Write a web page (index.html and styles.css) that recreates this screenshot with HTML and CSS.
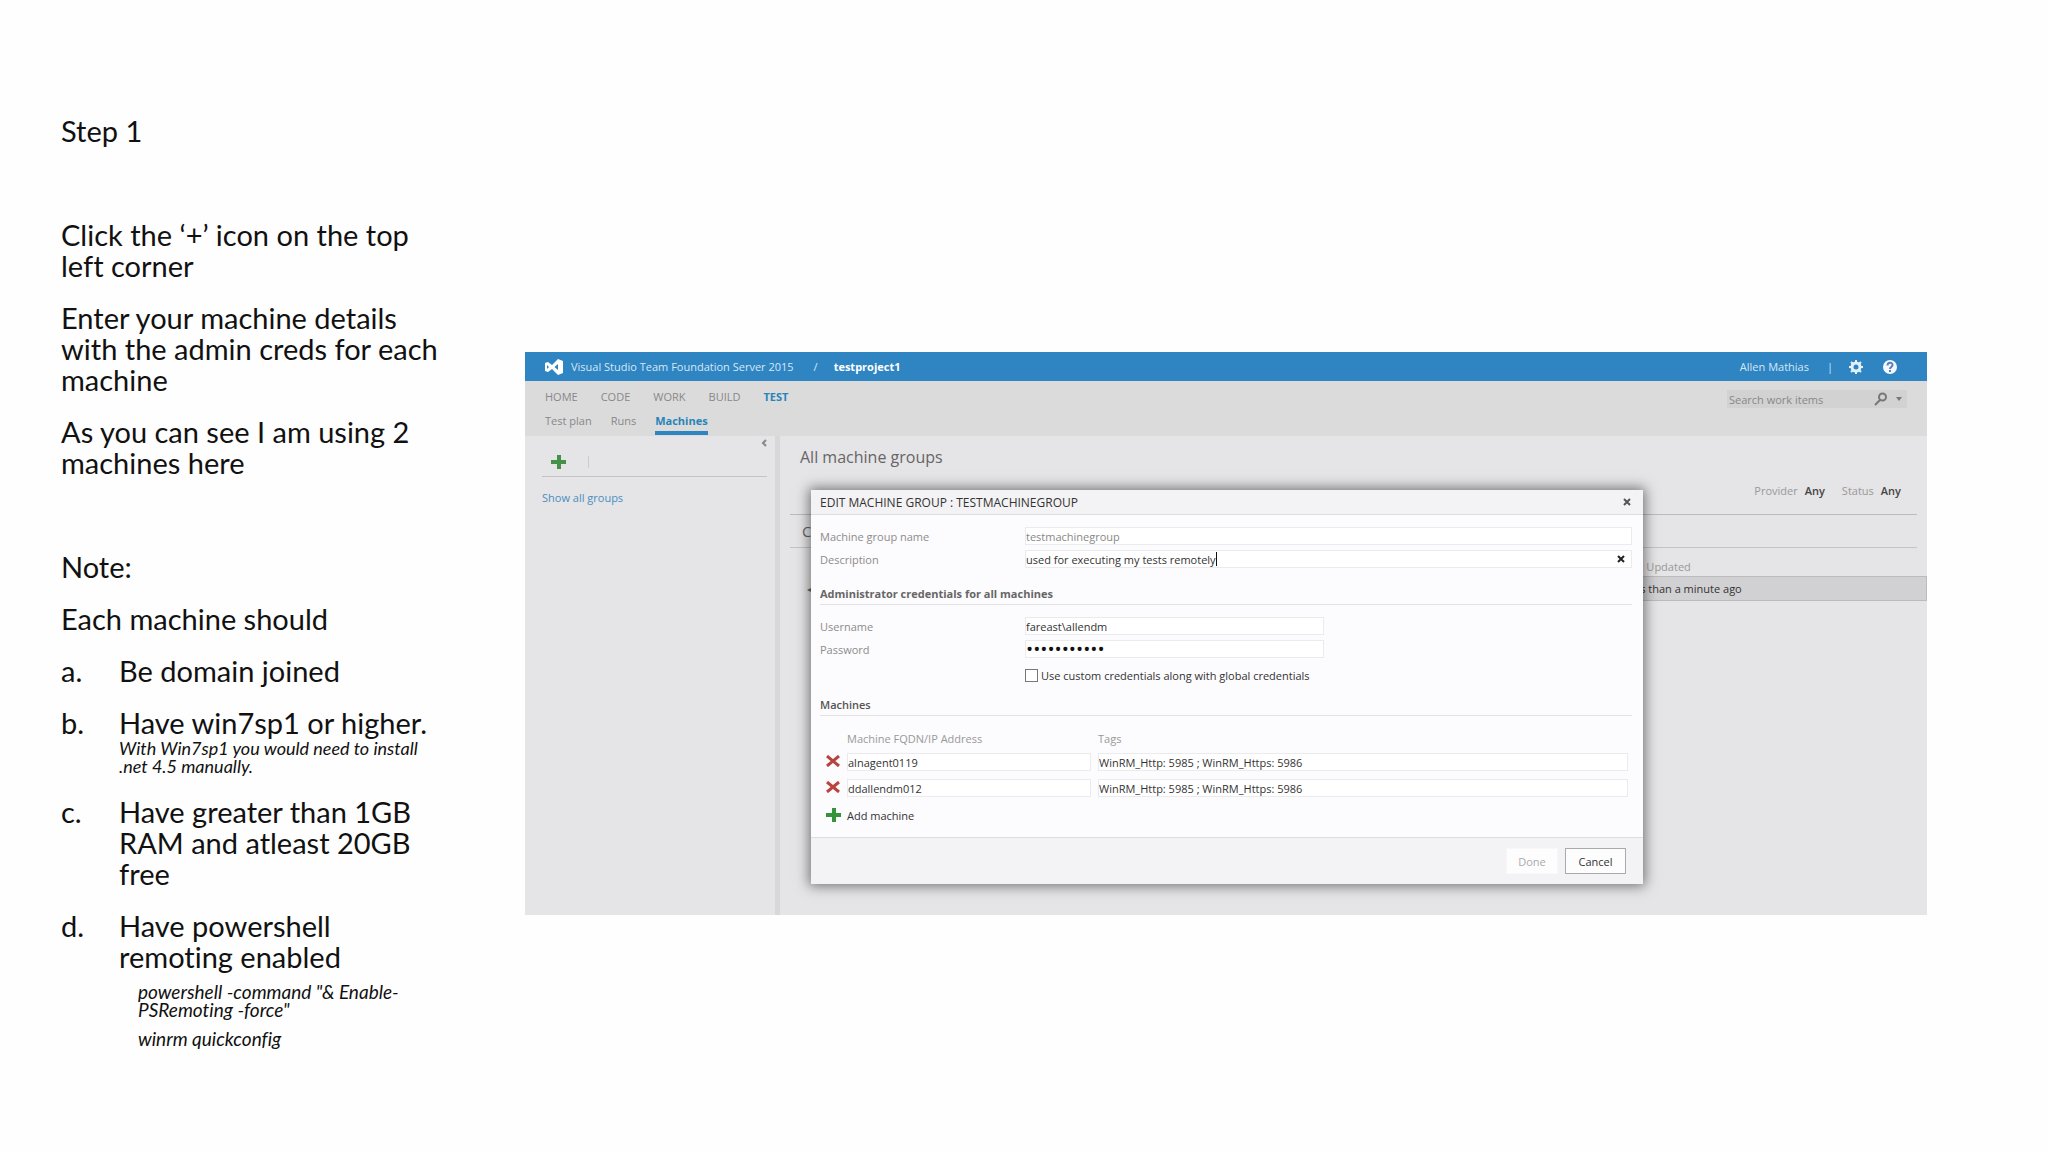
FILE: index.html
```html
<!DOCTYPE html>
<html lang="en">
<head>
    <meta charset="UTF-8">
    <meta name="viewport" content="width=device-width, initial-scale=1.0">
    <title>Step 1 - Machine groups</title>
    <link rel="stylesheet" href="styles.css">
</head>
<body>
    <div class="slide">
        <!-- Instructions -->
        <section class="notes">
            <p class="section-end">Step 1</p>
            <p>Click the ‘+’ icon on the top left corner</p>
            <p>Enter your machine details with the admin creds for each machine</p>
            <p class="section-end">As you can see I am using 2 machines here</p>
            <p>Note:</p>
            <p>Each machine should</p>
            <ol class="requirements">
                <li><span class="marker">a.</span><div>Be domain joined</div></li>
                <li><span class="marker">b.</span><div>Have win7sp1 or higher. <em class="small">With Win7sp1 you would need to install .net 4.5 manually.</em></div></li>
                <li><span class="marker">c.</span><div>Have greater than 1GB RAM and atleast 20GB free</div></li>
                <li><span class="marker">d.</span><div>Have powershell remoting enabled</div></li>
            </ol>
            <p class="command">powershell -command "&amp; Enable-PSRemoting -force"</p>
            <p class="command">winrm quickconfig</p>
        </section>

        <!-- Team Foundation Server window -->
        <div class="tfs">
            <div class="app">
                <header class="topbar">
                    <svg class="logo" viewBox="0 0 18 16"><path fill="#fff" fill-rule="evenodd" d="M13 0l5 2v12l-5 2-6-6-4 3-3-1V4l3-1 4 3zM2 6v4l2-2zM13 5L9.500 8l3.500 3z"/></svg>
                    <span class="product">Visual Studio Team Foundation Server 2015</span>
                    <span class="slash">/</span>
                    <a class="project" href="#">testproject1</a>
                    <a class="user" href="#">Allen Mathias</a>
                    <span class="divider">|</span>
                    <button class="icon-button" aria-label="Settings">
                        <svg width="14" height="14" viewBox="0 0 14 14"><circle cx="7" cy="7" r="4" fill="none" stroke="#e4f1fa" stroke-width="3"/><path stroke="#e4f1fa" stroke-width="2" d="M7 0v3M7 11v3M0 7h3M11 7h3M2 2l2 2M10 10l2 2M12 2l-2 2M2 12l2-2"/></svg>
                    </button>
                    <button class="icon-button" aria-label="Help">
                        <svg width="14" height="14" viewBox="0 0 14 14"><circle cx="7" cy="7" r="7" fill="#f4f8ff"/><path fill="none" stroke="#5c7fc0" stroke-width="2" d="M4.500 5.500C4.500 2 9.500 2 9.500 5c0 2-2.500 2-2.500 4M7 10v2"/></svg>
                    </button>
                </header>

                <div class="navbar">
                    <div class="menus">
                        <nav class="hubs">
                            <a href="#">HOME</a>
                            <a href="#">CODE</a>
                            <a href="#">WORK</a>
                            <a href="#">BUILD</a>
                            <a class="active" href="#">TEST</a>
                        </nav>
                        <nav class="tabs">
                            <a href="#">Test plan</a>
                            <a href="#">Runs</a>
                            <a class="active" href="#">Machines</a>
                        </nav>
                    </div>
                    <div class="search">
                        <input type="text" placeholder="Search work items" aria-label="Search work items">
                        <svg width="14" height="14" viewBox="0 0 14 14"><circle cx="8.500" cy="5" r="3.500" fill="none" stroke="#777" stroke-width="2"/><path stroke="#777" stroke-width="2" d="M6 8l-5 5"/></svg>
                        <svg width="6" height="4" viewBox="0 0 6 4"><path fill="#777" d="M0 0h6L3 4z"/></svg>
                    </div>
                </div>

                <div class="workspace">
                    <aside class="sidebar">
                        <button class="collapse" aria-label="Collapse">
                            <svg width="6" height="8" viewBox="0 0 6 8"><path fill="none" stroke="#888" stroke-width="2" d="M5 1L2 4l3 3"/></svg>
                        </button>
                        <div class="toolbar">
                            <button class="icon-button" aria-label="Add machine group">
                                <svg width="15" height="14" viewBox="0 0 15 14"><path fill="#46914a" d="M6 0h4v5h5v4h-5v5H6V9H0V5h6z"/></svg>
                            </button>
                            <span class="separator"></span>
                        </div>
                        <a class="show-all" href="#">Show all groups</a>
                    </aside>
                    <main class="content">
                        <h1>All machine groups</h1>
                        <div class="filters">
                            <span>Provider</span><b>Any</b>
                            <span class="status">Status</span><b>Any</b>
                        </div>
                        <div class="commands">C</div>
                        <table class="groups">
                            <thead>
                                <tr><th></th><th>Last Updated</th></tr>
                            </thead>
                            <tbody>
                                <tr><td>◂</td><td>Less than a minute ago</td></tr>
                            </tbody>
                        </table>
                    </main>
                </div>
            </div>

            <!-- Edit dialog, shares the grid cell with the app -->
            <form class="dialog">
                <div class="dialog-title">
                    <h2>EDIT MACHINE GROUP : TESTMACHINEGROUP</h2>
                    <button type="button" class="icon-button" aria-label="Close">
                        <svg width="8" height="8" viewBox="0 0 8 8"><path stroke="#555" stroke-width="2" d="M1 1l6 6M7 1L1 7"/></svg>
                    </button>
                </div>
                <div class="dialog-body">
                    <div class="row">
                        <label for="groupName">Machine group name</label>
                        <input class="box muted" type="text" id="groupName" value="testmachinegroup">
                    </div>
                    <div class="row">
                        <label for="description">Description</label>
                        <div class="box focused">
                            <input type="text" id="description" value="used for executing my tests remotely">
                            <span class="caret"></span>
                            <button type="button" class="icon-button" aria-label="Clear">
                                <svg width="8" height="8" viewBox="0 0 8 8"><path stroke="#222" stroke-width="2" d="M1 1l6 6M7 1L1 7"/></svg>
                            </button>
                        </div>
                    </div>

                    <h3 class="bold">Administrator credentials for all machines</h3>
                    <div class="row">
                        <label for="username">Username</label>
                        <input class="box short" type="text" id="username" value="fareast\allendm">
                    </div>
                    <div class="row">
                        <label for="password">Password</label>
                        <input class="box short" type="password" id="password" value="password123">
                    </div>
                    <div class="check">
                        <input type="checkbox" id="custom">
                        <label for="custom">Use custom credentials along with global credentials</label>
                    </div>

                    <h3 class="machines-heading">Machines</h3>
                    <table class="machines">
                        <thead>
                            <tr><th></th><th>Machine FQDN/IP Address</th><th>Tags</th></tr>
                        </thead>
                        <tbody>
                            <tr>
                                <td><button type="button" class="icon-button" aria-label="Remove alnagent0119"><svg width="14" height="12" viewBox="0 0 14 12"><path stroke="#b8433f" stroke-width="3" d="M1 1l12 10M13 1L1 11"/></svg></button></td>
                                <td><input class="box" type="text" aria-label="Machine address" value="alnagent0119"></td>
                                <td><input class="box" type="text" aria-label="Tags" value="WinRM_Http: 5985 ; WinRM_Https: 5986"></td>
                            </tr>
                            <tr>
                                <td><button type="button" class="icon-button" aria-label="Remove ddallendm012"><svg width="14" height="12" viewBox="0 0 14 12"><path stroke="#b8433f" stroke-width="3" d="M1 1l12 10M13 1L1 11"/></svg></button></td>
                                <td><input class="box" type="text" aria-label="Machine address" value="ddallendm012"></td>
                                <td><input class="box" type="text" aria-label="Tags" value="WinRM_Http: 5985 ; WinRM_Https: 5986"></td>
                            </tr>
                        </tbody>
                    </table>
                    <button type="button" class="add">
                        <svg width="15" height="14" viewBox="0 0 15 14"><path fill="#359339" d="M6 0h4v5h5v4h-5v5H6V9H0V5h6z"/></svg>
                        Add machine
                    </button>
                </div>
                <div class="dialog-footer">
                    <button type="button" class="done" disabled>Done</button>
                    <button type="button" class="cancel">Cancel</button>
                </div>
            </form>
        </div>
    </div>
</body>
</html>
```
FILE: styles.css
```css
* {
    box-sizing: border-box;
}
body {
    margin: 0;
    background-color: #fefefe;
    color: #111;
    font-family: "Open Sans", "Noto Sans", sans-serif;
    font-size: 11px;
}
h1, h2, h3, p, ol {
    margin: 0;
    padding: 0;
    font-weight: normal;
}
a {
    color: inherit;
    text-decoration: none;
}
button, input {
    font: inherit;
    color: inherit;
    margin: 0;
    padding: 0;
    border: none;
    background: none;
}
svg {
    display: block;
    flex: none;
}
.slide {
    display: grid;
    grid-template-columns: 384px 1fr;
    column-gap: 80px;
    align-items: start;
    padding: 115px 121px 80px 61px;
}

/* Instructions */
.notes {
    font-family: Lato, sans-serif;
    font-size: 29px;
    font-variant-ligatures: none;
    line-height: 31px;
}
.notes p {
    margin-bottom: 21px;
}
.notes .section-end {
    margin-bottom: 73px;
}
.requirements {
    list-style: none;
}
.requirements li {
    display: flex;
    margin-bottom: 21px;
}
.marker {
    flex: 0 0 58px;
}
.small {
    display: block;
    padding-top: 1px;
    font-size: 18px;
    line-height: 18px;
}
.requirements li:last-child {
    margin-bottom: 11px;
}
.notes .command {
    margin: 0 30px 11px 77px;
    font-size: 19px;
    font-style: italic;
    line-height: 18px;
}

/* App window */
.tfs {
    display: grid;
    margin-top: 237px;
}
.app, .dialog {
    grid-area: 1 / 1;
}
.app {
    display: flex;
    flex-direction: column;
    min-width: 0;
    background-color: #e5e4e6;
    color: #666;
}
.topbar {
    display: flex;
    align-items: center;
    height: 29px;
    padding: 0 30px 0 20px;
    background-color: #2f84c2;
    color: #d5e8f6;
}
.logo {
    width: 18px;
    height: 16px;
    margin-right: 8px;
}
.slash {
    margin: 0 16px 0 20px;
}
.project {
    color: #fff;
    font-weight: bold;
}
.user {
    margin-left: auto;
}
.divider {
    margin: 0 16px 0 18px;
}
.topbar .icon-button + .icon-button {
    margin-left: 20px;
}
.navbar {
    display: flex;
    justify-content: space-between;
    height: 55px;
    padding: 6px 20px 0;
    background-color: #dbdbdc;
    color: #888;
}
.hubs, .tabs {
    display: flex;
    line-height: 20px;
}
.hubs {
    gap: 23px;
}
.tabs {
    gap: 19px;
    padding-top: 4px;
}
.hubs .active, .tabs .active {
    color: #2784b8;
    font-weight: bold;
}
.tabs .active {
    border-bottom: 4px solid #2f84c2;
}
.search {
    display: flex;
    align-items: center;
    width: 180px;
    height: 18px;
    margin-top: 3px;
    padding: 0 5px 0 2px;
    gap: 8px;
    background-color: #d2d2d3;
}
.search input {
    flex: 1;
    min-width: 0;
}
.search input::placeholder {
    color: #888;
}
.workspace {
    display: flex;
    flex: 1;
}
.sidebar {
    flex: 0 0 255px;
    padding: 3px 8px 0 17px;
    border-right: 5px solid #d8d7d9;
}
.collapse {
    display: block;
    margin-left: auto;
}
.toolbar {
    display: flex;
    align-items: center;
    gap: 22px;
    height: 30px;
    padding-left: 9px;
    border-bottom: 1px solid #c4c4c6;
}
.separator {
    width: 1px;
    height: 12px;
    background-color: #ccc;
}
.show-all {
    display: block;
    margin-top: 13px;
    color: #4a8fc0;
}
.content {
    flex: 1;
    padding-top: 9px;
}
.content h1 {
    padding-left: 20px;
    font-size: 16px;
    line-height: 24px;
}
.filters {
    display: flex;
    gap: 7px;
    margin: 0 10px;
    padding: 14px 16px 15px;
    justify-content: flex-end;
    line-height: 16px;
    border-bottom: 1px solid #bbb;
    color: #999;
}
.filters b {
    color: #444;
    font-weight: 600;
}
.status {
    margin-left: 10px;
}
.commands {
    margin: 0 10px;
    padding-left: 12px;
    font-size: 15px;
    line-height: 32px;
    border-bottom: 1px solid #c4c4c6;
}
.groups {
    width: 100%;
    border-collapse: collapse;
    text-align: left;
}
.groups th {
    height: 28px;
    padding: 9px 0 0;
    color: #999;
    font-weight: normal;
}
.groups td {
    height: 24px;
    padding: 0;
}
.groups td:first-child {
    padding-left: 27px;
    font-size: 8px;
}
.groups th:last-child, .groups td:last-child {
    width: 304px;
}
.groups td:last-child {
    background-color: #d1d0d2;
    border: 1px solid #bbb;
    color: #333;
}

/* Dialog */
.dialog {
    z-index: 1;
    margin: 138px 284px 31px 286px;
    background-color: #fcfbfd;
    color: #333;
    box-shadow: 0 0 12px 2px rgba(0, 0, 0, 0.5);
}
.dialog-title {
    display: flex;
    align-items: center;
    justify-content: space-between;
    height: 25px;
    padding: 0 12px 0 9px;
    background-color: #f3f2f4;
    border-bottom: 1px solid #ddd;
}
.dialog-title h2 {
    font-size: 12px;
}
.dialog-body {
    height: 322px;
    padding: 12px 11px 0 9px;
}
.row {
    display: grid;
    grid-template-columns: 205px 1fr;
    align-items: center;
    margin-bottom: 5px;
}
.row label {
    color: #8c8c8c;
}
.box {
    width: 100%;
    height: 18px;
    background-color: #fff;
    border: 1px solid #ebeaec;
}
.short {
    width: 299px;
}
.box[type="password"] {
    font-size: 19px;
    color: #111;
}
.muted {
    color: #888;
}
.focused {
    display: flex;
    align-items: center;
    padding-right: 6px;
}
.focused input {
    field-sizing: content;
}
.caret {
    width: 1px;
    height: 14px;
    background-color: #111;
}
.focused .icon-button {
    margin-left: auto;
}
.dialog h3 {
    margin: 13px 0 12px;
    font-size: 11px;
    line-height: 20px;
    border-bottom: 1px solid #e2e1e3;
}
.dialog .bold {
    margin-top: 16px;
    font-weight: bold;
    color: #666;
}
.dialog .machines-heading {
    font-weight: 600;
    color: #555;
}
.check {
    display: flex;
    align-items: center;
    gap: 3px;
    height: 14px;
    margin: 10px 0 0 205px;
}
.check input {
    appearance: none;
    width: 13px;
    height: 13px;
    border: 1px solid #777;
    background-color: #fff;
}
.machines {
    width: 100%;
    border-collapse: collapse;
    table-layout: fixed;
    text-align: left;
}
.machines th {
    height: 21px;
    padding: 0;
    color: #999;
    font-weight: normal;
}
.machines td {
    height: 26px;
    padding: 0 4px 0 0;
}
.machines th:first-child {
    width: 27px;
}
.machines th:nth-child(2) {
    width: 251px;
}
.machines td:nth-child(2) {
    padding-right: 7px;
}
.machines td:first-child {
    padding-left: 6px;
}
.add {
    display: flex;
    align-items: center;
    gap: 6px;
    height: 28px;
    padding-left: 6px;
}
.dialog-footer {
    display: flex;
    justify-content: flex-end;
    gap: 7px;
    height: 47px;
    padding: 10px 17px;
    background-color: #f3f2f4;
    border-top: 1px solid #ddd;
}
.dialog-footer button {
    height: 26px;
    background-color: #fdfdfd;
    border: 1px solid #f8f8f9;
}
.dialog-footer .done {
    width: 52px;
    color: #aaa;
}
.dialog-footer .cancel {
    width: 61px;
    border-color: #aaa;
}
```
